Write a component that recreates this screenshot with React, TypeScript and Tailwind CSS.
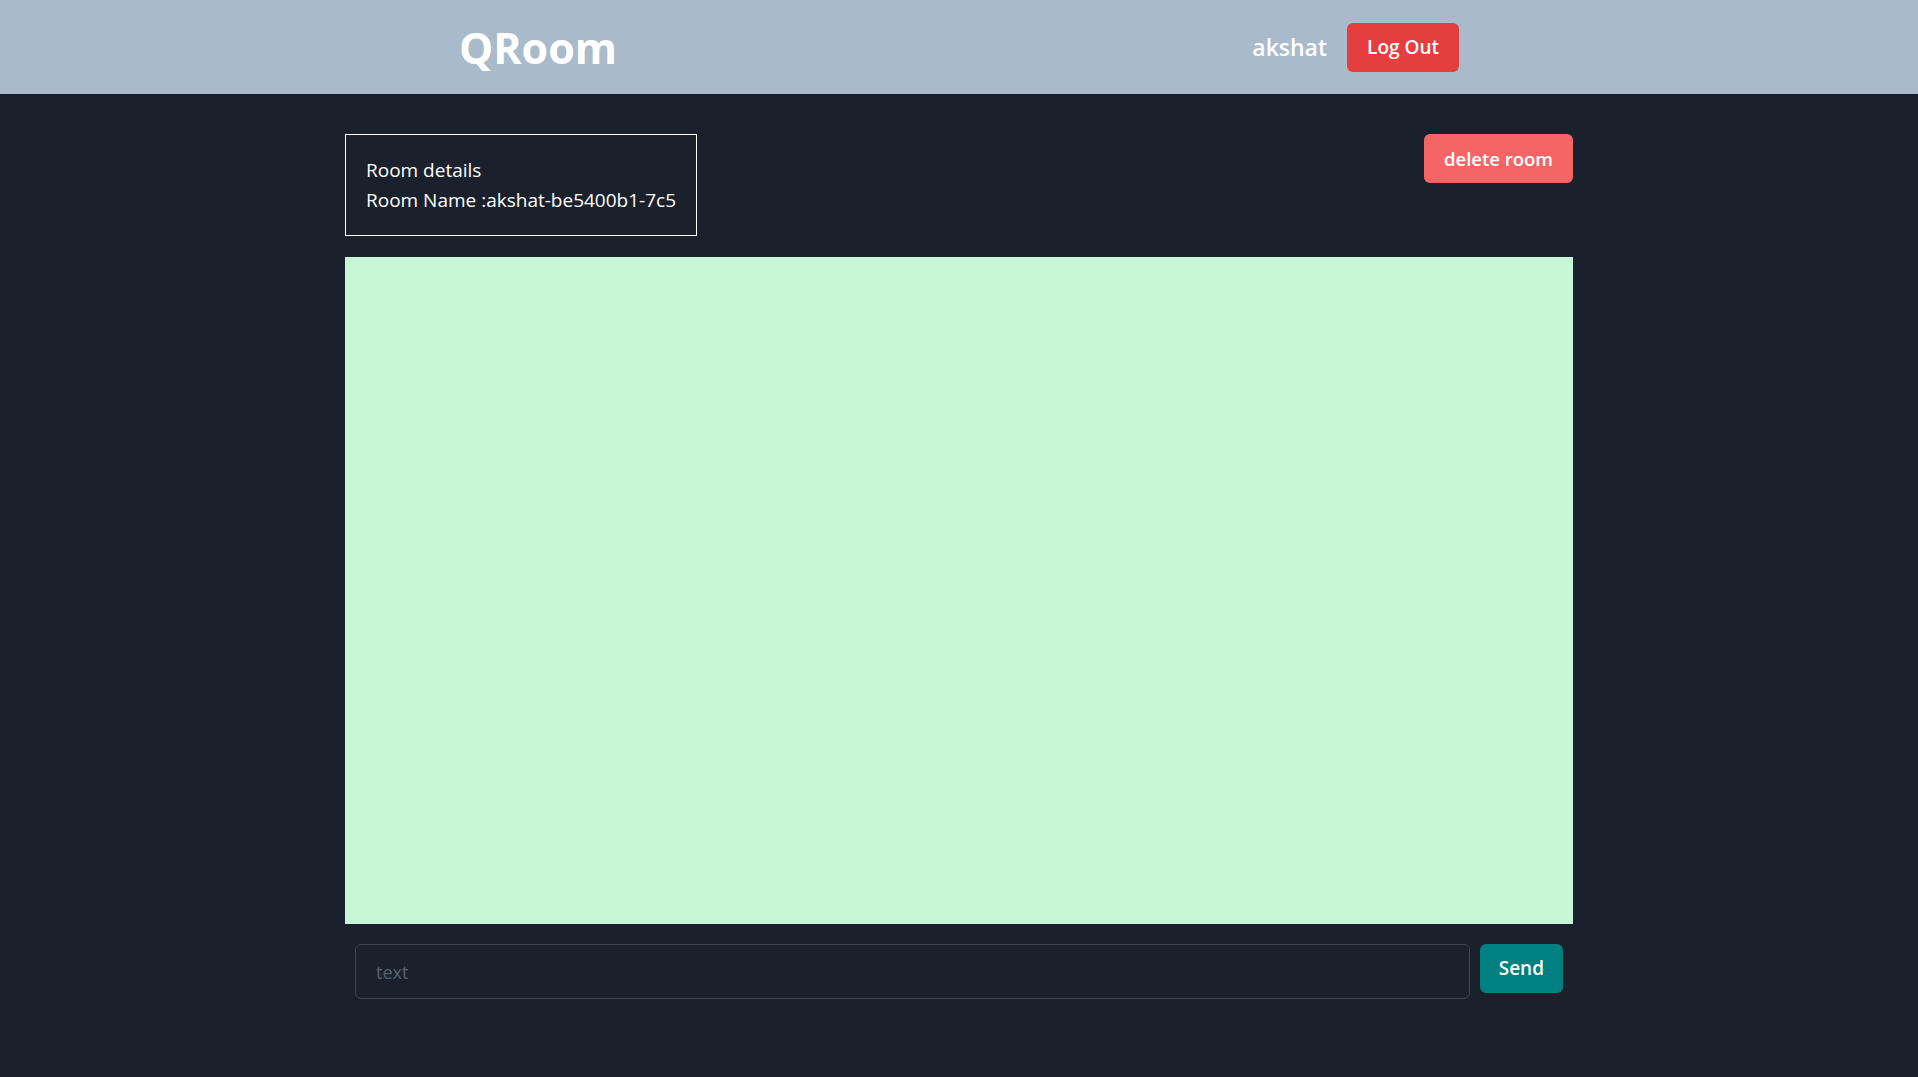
export default function App() {
    return (
        <div className="min-h-screen bg-[#1a202c] font-['Open_Sans',sans-serif]">
            <nav className="h-[94px] bg-[#a9bacb]">
                <div className="mx-auto flex h-full w-[1000px] items-center justify-between">
                    <h1 className="text-[43px] font-bold leading-none text-white">QRoom</h1>
                    <div className="flex items-center gap-5">
                        <span className="text-[23px] font-semibold text-white">akshat</span>
                        <button className="h-[49px] rounded-md bg-[#e53e3e] px-5 text-[19px] font-semibold text-white">
                            Log Out
                        </button>
                    </div>
                </div>
            </nav>

            <div className="mx-auto w-[1228px] pt-10">
                <div className="flex items-start justify-between">
                    <div className="border border-white p-5 text-[19px] leading-[30px] text-white">
                        <p>Room details</p>
                        <p>Room Name :akshat-be5400b1-7c5</p>
                    </div>
                    <button className="h-[49px] rounded-md bg-[#f56565] px-5 text-[18.5px] font-semibold text-white">
                        delete room
                    </button>
                </div>

                <div className="mt-[21px] h-[667px] bg-[#c6f6d5]"></div>

                <div className="mt-5 flex items-start gap-2.5 px-2.5">
                    <input
                        type="text"
                        placeholder="text"
                        className="h-[55px] flex-1 rounded-md border border-[#3f4553] bg-transparent px-5 text-[18px] text-white outline-none placeholder:text-[#5a606b]"
                    />
                    <button className="h-[49px] rounded-md bg-[#008080] px-[19px] text-[19px] font-semibold text-white">
                        Send
                    </button>
                </div>
            </div>
        </div>
    )
}
